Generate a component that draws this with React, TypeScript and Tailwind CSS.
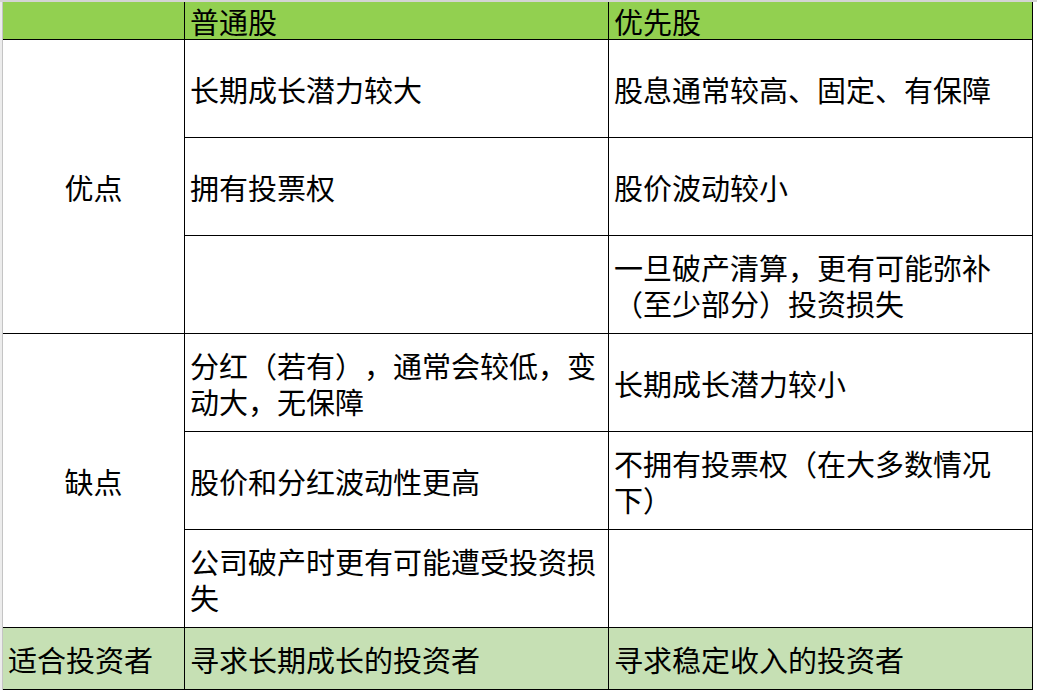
const header = ["", "普通股", "优先股"];

const groups = [
  {
    label: "优点",
    rows: [
      ["长期成长潜力较大", "股息通常较高、固定、有保障"],
      ["拥有投票权", "股价波动较小"],
      ["", "一旦破产清算，更有可能弥补（至少部分）投资损失"],
    ],
  },
  {
    label: "缺点",
    rows: [
      ["分红（若有），通常会较低，变动大，无保障", "长期成长潜力较小"],
      ["股价和分红波动性更高", "不拥有投票权（在大多数情况下）"],
      ["公司破产时更有可能遭受投资损失", ""],
    ],
  },
];

const footer = ["适合投资者", "寻求长期成长的投资者", "寻求稳定收入的投资者"];

const cell = "border-r border-b border-black px-[5px] leading-[36px]";

const App = () => {
  return (
    <div className="min-h-screen bg-white font-['Noto_Sans_CJK_SC',sans-serif] text-[29px] text-black [text-spacing-trim:space-all]">
      <div className="flex border-t-2 border-t-[#d4d4d4]">
        <div className="w-[2px] bg-[#ececec]" />
        <div className="w-px bg-[#c4c4c4]" />
        <div className="grid grid-cols-[182px_424px_424px] grid-rows-[38px_98px_98px_98px_98px_98px_98px_62px]">
          {/* Header */}
          {header.map((h, i) => (
            <div key={i} className={`${cell} flex items-end bg-[#92d050]`}>
              {h}
            </div>
          ))}

          {/* 优点 / 缺点 */}
          {groups.map((g) => (
            <>
              <div key={g.label} className={`${cell} row-span-3 flex items-center justify-center`}>
                {g.label}
              </div>
              {g.rows.map((r, ri) =>
                r.map((t, ci) => (
                  <div key={`${g.label}-${ri}-${ci}`} className={`${cell} flex items-center`}>
                    <span>{t}</span>
                  </div>
                ))
              )}
            </>
          ))}

          {/* Footer */}
          {footer.map((f, i) => (
            <div key={i} className={`${cell} flex items-center bg-[#c6e0b4]`}>
              {f}
            </div>
          ))}
        </div>
      </div>
    </div>
  );
};

export default App;
